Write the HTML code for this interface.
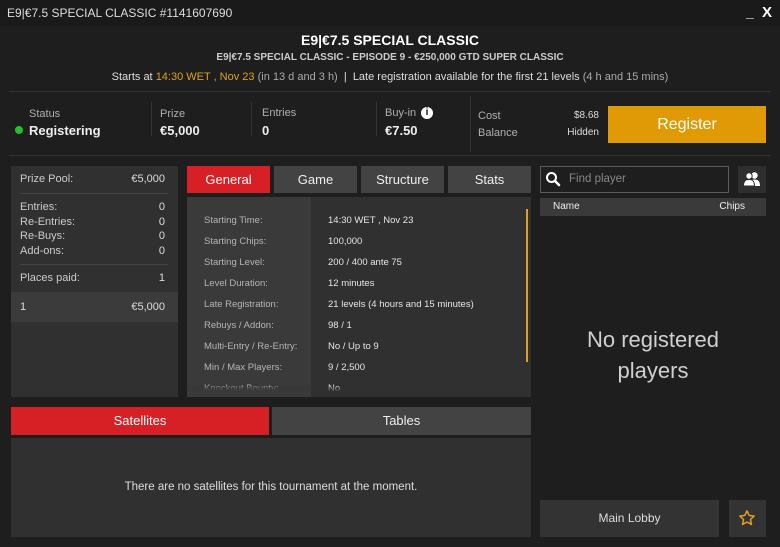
<!DOCTYPE html>
<html><head><meta charset="utf-8"><style>
*{margin:0;padding:0;box-sizing:border-box}
body{width:780px;height:547px;background:#1e1e1e;font-family:"Liberation Sans",sans-serif;color:#e6e6e6;position:relative;overflow:hidden}
.a{position:absolute;white-space:nowrap}
.c{text-align:center}
.r{text-align:right}
.lbl{color:#b0b0b0}
</style></head><body>
<div class="a" style="left:0;top:0;width:780px;height:26px;background:#1a1a1a"></div>
<div class="a" style="left:7px;top:6px;font-size:12px;color:#ddd">E9|€7.5 SPECIAL CLASSIC #1141607690</div>
<div class="a" style="left:746px;top:4px;font-size:14px;font-weight:bold;color:#fff">_</div>
<div class="a" style="left:762px;top:4px;font-size:15px;font-weight:bold;color:#fff">X</div>

<div class="a c" style="left:0;width:780px;top:32px;font-size:14px;font-weight:bold;color:#fff">E9|€7.5 SPECIAL CLASSIC</div>
<div class="a c" style="left:0;width:780px;top:52px;font-size:10px;font-weight:bold;color:#ccc">E9|€7.5 SPECIAL CLASSIC - EPISODE 9 - €250,000 GTD SUPER CLASSIC</div>
<div class="a c" style="left:0;width:780px;top:71px;font-size:11px;color:#ddd">Starts at <span style="color:#e0a020">14:30 WET , Nov 23</span> <span style="color:#aaa">(in 13 d and 3 h)</span> &nbsp;| &nbsp;Late registration available for the first 21 levels <span style="color:#aaa">(4 h and 15 mins)</span></div>
<div class="a" style="left:9px;top:91px;width:762px;height:1px;background:#333"></div>

<div class="a" style="left:15px;top:126px;width:8px;height:8px;border-radius:50%;background:#1fc12c"></div>
<div class="a lbl" style="left:29px;top:108px;font-size:11px">Status</div>
<div class="a" style="left:29px;top:123px;font-size:13px;font-weight:bold;color:#eee">Registering</div>
<div class="a" style="left:151px;top:102px;width:1px;height:34px;background:#333"></div>
<div class="a lbl" style="left:160px;top:108px;font-size:11px">Prize</div>
<div class="a" style="left:160px;top:123px;font-size:13px;font-weight:bold;color:#eee">€5,000</div>
<div class="a" style="left:251px;top:102px;width:1px;height:34px;background:#333"></div>
<div class="a lbl" style="left:262px;top:107px;font-size:11px">Entries</div>
<div class="a" style="left:262px;top:123px;font-size:13px;font-weight:bold;color:#eee">0</div>
<div class="a" style="left:376px;top:102px;width:1px;height:34px;background:#333"></div>
<div class="a lbl" style="left:385px;top:107px;font-size:11px">Buy-in</div>
<div class="a c" style="left:421px;top:107px;width:12px;height:12px;border-radius:50%;background:#fff;color:#111;font-size:10px;font-weight:bold;line-height:12px">i</div>
<div class="a" style="left:385px;top:123px;font-size:13px;font-weight:bold;color:#eee">€7.50</div>
<div class="a" style="left:470px;top:96px;width:1px;height:56px;background:#333"></div>
<div class="a lbl" style="left:478px;top:110px;font-size:11px">Cost</div>
<div class="a r" style="left:540px;width:59px;top:110px;font-size:10px;color:#ddd">$8.68</div>
<div class="a lbl" style="left:478px;top:127px;font-size:11px">Balance</div>
<div class="a r" style="left:540px;width:59px;top:127px;font-size:10px;color:#ddd">Hidden</div>
<div class="a c" style="left:608px;top:106px;width:158px;height:37px;background:#e09a06;color:#fff;font-size:16px;line-height:37px">Register</div>
<div class="a" style="left:9px;top:155px;width:762px;height:1px;background:#333"></div>

<!-- left panel -->
<div class="a" style="left:11px;top:166px;width:167px;height:231px;background:#303030"></div>
<div class="a lbl" style="left:20px;top:173px;font-size:11px;color:#ccc">Prize Pool:</div>
<div class="a r" style="left:100px;width:65px;top:173px;font-size:11px;color:#ddd">€5,000</div>
<div class="a" style="left:20px;top:193px;width:148px;height:1px;background:#444"></div>
<div class="a" style="left:20px;top:200px;font-size:11px;color:#ccc;line-height:14.7px">Entries:<br>Re-Entries:<br>Re-Buys:<br>Add-ons:</div>
<div class="a r" style="left:100px;width:65px;top:200px;font-size:11px;color:#ddd;line-height:14.7px">0<br>0<br>0<br>0</div>
<div class="a" style="left:20px;top:264px;width:148px;height:1px;background:#444"></div>
<div class="a" style="left:20px;top:272px;font-size:11px;color:#ccc">Places paid:</div>
<div class="a r" style="left:100px;width:65px;top:272px;font-size:11px;color:#ddd">1</div>
<div class="a" style="left:11px;top:292px;width:167px;height:30px;background:#3b3b3b"></div>
<div class="a" style="left:20px;top:301px;font-size:11px;color:#ddd">1</div>
<div class="a r" style="left:100px;width:65px;top:301px;font-size:11px;color:#ddd">€5,000</div>

<!-- tabs -->
<div class="a c" style="left:187px;top:166px;width:83px;height:27px;background:#d71f26;color:#fff;font-size:13px;line-height:27px">General</div>
<div class="a c" style="left:274px;top:166px;width:83px;height:27px;background:#434343;color:#eee;font-size:13px;line-height:27px">Game</div>
<div class="a c" style="left:361px;top:166px;width:83px;height:27px;background:#434343;color:#eee;font-size:13px;line-height:27px">Structure</div>
<div class="a c" style="left:448px;top:166px;width:83px;height:27px;background:#434343;color:#eee;font-size:13px;line-height:27px">Stats</div>
<div class="a" style="left:187px;top:197px;width:344px;height:200px;background:#303030;overflow:hidden">
 <div class="a" style="left:0;top:0;width:124px;height:200px;background:#3a3a3a"></div>
 <div class="a" style="left:17px;top:13px;font-size:9.5px;color:#b5b5b5;line-height:21px">Starting Time:<br>Starting Chips:<br>Starting Level:<br>Level Duration:<br>Late Registration:<br>Rebuys / Addon:<br>Multi-Entry / Re-Entry:<br>Min / Max Players:<br>Knockout Bounty:</div>
 <div class="a" style="left:141px;top:13px;font-size:9.5px;color:#e6e6e6;line-height:21px">14:30 WET , Nov 23<br>100,000<br>200 / 400 ante 75<br>12 minutes<br>21 levels (4 hours and 15 minutes)<br>98 / 1<br>No / Up to 9<br>9 / 2,500<br>No</div>
 <div class="a" style="left:0;top:188px;width:344px;height:12px;background:linear-gradient(rgba(48,48,48,0),#303030 60%)"></div>
 <div class="a" style="left:0;top:188px;width:124px;height:12px;background:linear-gradient(rgba(58,58,58,0),#3a3a3a 60%)"></div>
 <div class="a" style="left:339px;top:12px;width:2px;height:153px;background:#e0a020"></div>
</div>

<!-- bottom -->
<div class="a c" style="left:11px;top:407px;width:258px;height:28px;background:#d71f26;color:#fff;font-size:13px;line-height:28px">Satellites</div>
<div class="a c" style="left:272px;top:407px;width:259px;height:28px;background:#434343;color:#eee;font-size:13px;line-height:28px">Tables</div>
<div class="a" style="left:11px;top:438px;width:520px;height:99px;background:#303030"></div>
<div class="a c" style="left:11px;width:520px;top:481px;font-size:11.5px;color:#ddd">There are no satellites for this tournament at the moment.</div>

<!-- right -->
<div class="a" style="left:540px;top:166px;width:189px;height:27px;border:1px solid #5a5a5a;background:#1e1e1e"></div>
<svg class="a" style="left:545px;top:171px" width="16" height="16" viewBox="0 0 16 16"><circle cx="6.5" cy="6.5" r="4.5" fill="none" stroke="#fff" stroke-width="2"/><path d="M10 10l4 4" stroke="#fff" stroke-width="2.5" stroke-linecap="round"/></svg>
<div class="a" style="left:569px;top:173px;font-size:11.5px;color:#888">Find player</div>
<div class="a" style="left:738px;top:166px;width:28px;height:27px;background:#2e2e2e"></div>
<svg class="a" style="left:743px;top:171px" width="18" height="16" viewBox="0 0 18 16"><circle cx="11.5" cy="4.5" r="3.2" fill="#fff"/><path d="M6 15c0-5 2-6.5 5.5-6.5S17 10 17 15z" fill="#fff"/><circle cx="6" cy="5" r="3.2" fill="#fff" stroke="#2e2e2e" stroke-width="1"/><path d="M0.5 15c0-5 2-6.5 5.5-6.5S11.5 10 11.5 15z" fill="#fff" stroke="#2e2e2e" stroke-width="1"/></svg>
<div class="a" style="left:540px;top:198px;width:226px;height:18px;background:#3a3a3a"></div>
<div class="a" style="left:553px;top:201px;font-size:10px;color:#eee">Name</div>
<div class="a r" style="left:680px;width:65px;top:201px;font-size:10px;color:#eee">Chips</div>
<div class="a c" style="left:540px;width:226px;top:324px;font-size:22px;color:#d0d0d0;line-height:31px;white-space:normal">No registered<br>players</div>
<div class="a c" style="left:540px;top:500px;width:179px;height:37px;background:#333;color:#ddd;font-size:12px;line-height:37px">Main Lobby</div>
<div class="a" style="left:729px;top:500px;width:37px;height:37px;background:#333"></div>
<svg class="a" style="left:738px;top:509px" width="18" height="18" viewBox="0 0 24 24"><path d="M12 2.5l2.9 6.1 6.6.8-4.9 4.6 1.3 6.6L12 17.3l-5.9 3.3 1.3-6.6L2.5 9.4l6.6-.8z" fill="none" stroke="#e0a020" stroke-width="2" stroke-linejoin="round"/></svg>
</body></html>
